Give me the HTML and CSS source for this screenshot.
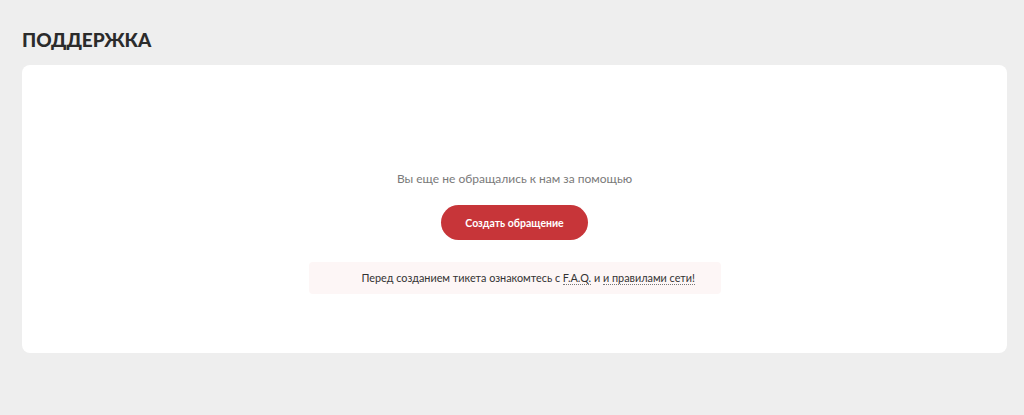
FILE: index.html
```html
<!DOCTYPE html>
<html lang="ru">
<head>
<meta charset="utf-8">
<title>Поддержка</title>
<link rel="stylesheet" href="styles.css">
</head>
<body>
<main class="page">
  <h1 class="page-title">ПОДДЕРЖКА</h1>
  <section class="card">
    <p class="empty-text">Вы еще не обращались к нам за помощью</p>
    <button class="btn-create" type="button">Создать обращение</button>
    <div class="notice">Перед созданием тикета ознакомтесь с <a class="link" href="#">F.A.Q.</a> и <a class="link" href="#">и правилами сети!</a></div>
  </section>
</main>
</body>
</html>
```

FILE: styles.css
```css
* { box-sizing: border-box; }
html, body { margin: 0; padding: 0; }
body {
  background: #eeeeee;
  font-family: Lato, "Open Sans", "Liberation Sans", sans-serif;
  color: #333;
}
.page {
  padding: 26px 17px 0 22px;
}
.page-title {
  margin: 0 0 11px;
  font-size: 19px;
  line-height: 28px;
  font-weight: 900;
  color: #2b2b2b;
  letter-spacing: -0.1px;
}
.card {
  background: #fff;
  border-radius: 8px;
  height: 288px;
  padding-top: 105px;
  display: flex;
  flex-direction: column;
  align-items: center;
}
.empty-text {
  margin: 0;
  font-size: 12px;
  line-height: 18px;
  color: #7a7a7a;
}
.btn-create {
  margin-top: 17px;
  width: 147px;
  height: 35px;
  border: 0;
  border-radius: 18px;
  background: #c73539;
  color: #fff;
  font-family: inherit;
  font-size: 10.5px;
  font-weight: 700;
  cursor: pointer;
}
.notice {
  margin-top: 22px;
  width: 412px;
  height: 32px;
  border-radius: 4px;
  background: #fdf6f6;
  font-size: 10.85px;
  line-height: 32px;
  color: #333;
  padding-left: 53px;
  white-space: nowrap;
}
.link {
  color: #333;
  text-decoration: none;
  border-bottom: 1px dotted #777;
}
```
